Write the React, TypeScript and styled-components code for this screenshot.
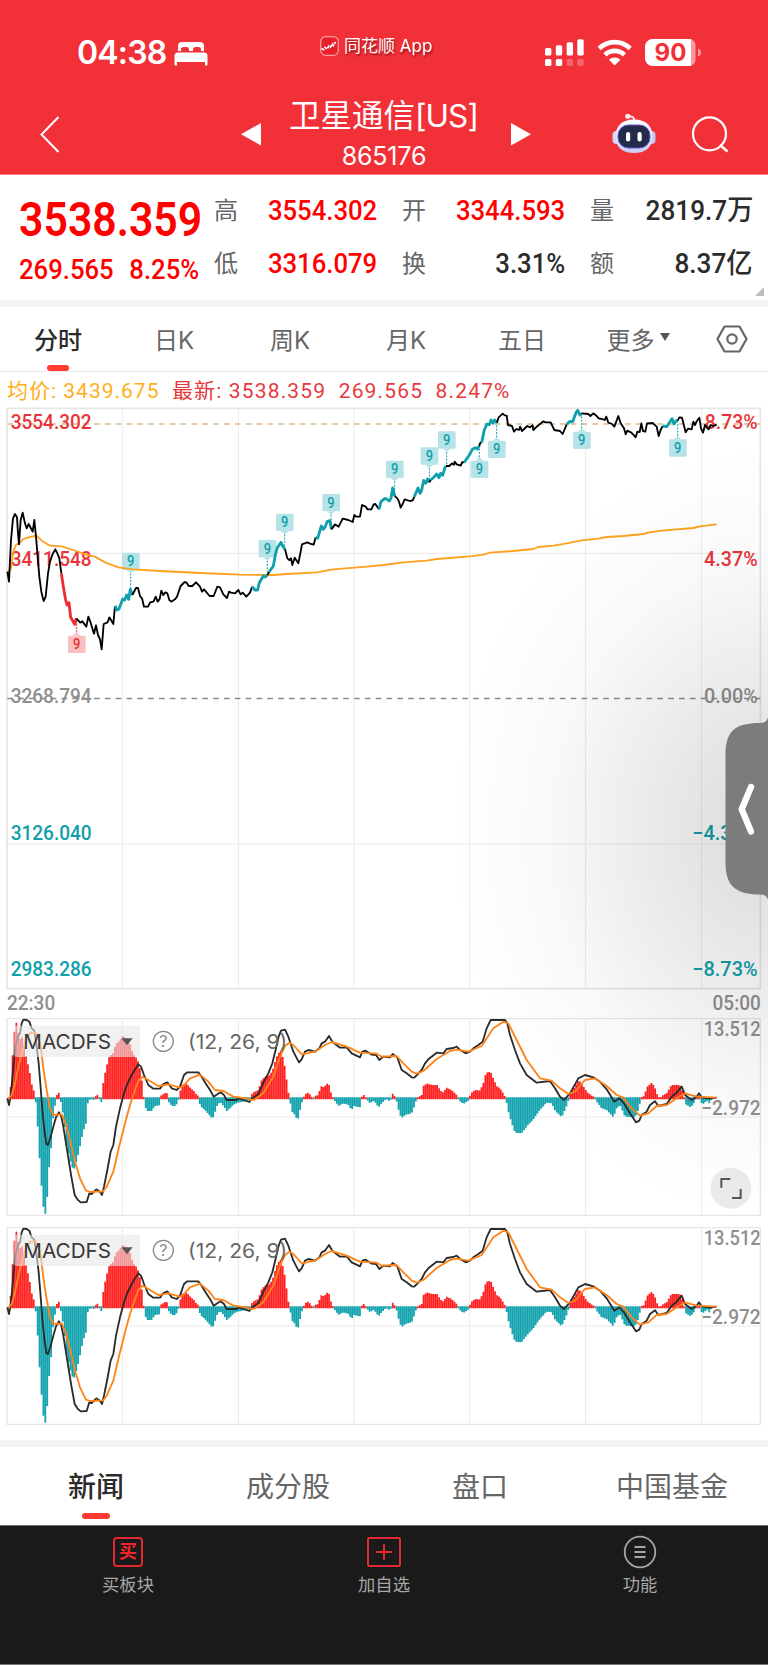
import React from "react";
import styled, { createGlobalStyle } from "styled-components";

const sans = `Inter, "Noto Sans CJK SC", sans-serif`;
const din = `Roboto, "Noto Sans CJK SC", sans-serif`;

const Global = createGlobalStyle`
  * { box-sizing: border-box; }
  body { margin: 0; background: #fff; }
`;

const Page = styled.div`
  position: relative;
  width: 768px;
  height: 1665px;
  overflow: hidden;
  display: flex;
  flex-direction: column;
  background: #fff;
  font-family: ${sans};
  white-space: nowrap;
`;

/* ---------- header ---------- */
const Header = styled.header`
  height: 175px;
  flex: none;
  background: #f23038;
  border-bottom: 1px solid #f88085;
  color: #fff;
`;
const StatusBar = styled.div`
  height: 90px;
  display: grid;
  grid-template-columns: 320px 223px 1fr;
  align-items: start;
`;
const Clock = styled.div`
  display: flex;
  align-items: flex-start;
  gap: 8px;
  padding: 33px 0 0 77px;
  font-size: 32px;
  line-height: 40px;
  font-weight: 600;
  letter-spacing: -0.8px;
  svg { margin-top: 9px; }
`;
const AppBadge = styled.div`
  display: flex;
  align-items: center;
  gap: 5px;
  padding-top: 32px;
  font-size: 17px;
  line-height: 25px;
  text-shadow: 1px 2px 2px rgba(90, 0, 0, 0.6);
  span { padding-top: 2px; }
`;
const StatusIcons = styled.div`
  padding-top: 36.5px;
  svg { display: block; }
`;
const NavBar = styled.div`
  height: 84px;
  display: grid;
  grid-template-columns: 40px 201px 20px 1fr 20px 81px 45px 34px 77px;
`;
const NavIcon = styled.div<{ $top: number }>`
  padding-top: ${(p) => p.$top}px;
  svg { display: block; }
`;
const TitleBlock = styled.div`
  text-align: center;
  padding-right: 5px;
`;
const Title = styled.div`
  margin-top: 4px;
  font-size: 31.5px;
  line-height: 44px;
`;
const TitleLatin = styled.span`
  letter-spacing: -0.9px;
`;
const Code = styled.div`
  margin-top: 3px;
  font-size: 25px;
  line-height: 30px;
  letter-spacing: -0.2px;
  padding-left: 1px;
`;

/* ---------- quote ---------- */
const Quote = styled.section`
  height: 125px;
  flex: none;
  position: relative;
  display: grid;
  grid-template-columns: 195px 163px 188px 188px;
  padding-left: 19px;
  font-family: ${din};
`;
const Num = styled.span<{ $s?: number; $o?: string }>`
  display: inline-block;
  transform: scaleX(${(p) => p.$s ?? 0.917});
  transform-origin: ${(p) => p.$o ?? "right"} center;
`;
const LastPrice = styled.div`
  color: #f00;
  font-weight: 600;
  font-size: 48.5px;
  line-height: 56px;
  margin-top: 17px;
  height: 56px;
`;
const Change = styled.div`
  display: flex;
  justify-content: space-between;
  width: 180px;
  color: #f00;
  font-size: 28px;
  line-height: 34px;
  font-weight: 500;
  margin-top: 5px;
`;
const StatColumn = styled.div`
  display: flex;
  flex-direction: column;
  padding-top: 16px;
`;
const Stat = styled.div<{ $red?: boolean }>`
  height: 53px;
  display: flex;
  justify-content: space-between;
  align-items: flex-start;
  font-size: 28px;
  line-height: 40px;
  font-weight: 500;
  color: ${(p) => (p.$red ? "#f00" : "#2b2b2b")};
`;
const StatName = styled.span<{ $indent?: boolean }>`
  padding-left: ${(p) => (p.$indent ? 25 : 0)}px;
  font-size: 24px;
  line-height: 41px;
  font-weight: 400;
  color: #666;
`;
const Corner = styled.svg`
  position: absolute;
  right: 4px;
  bottom: 4px;
`;
const Divider = styled.div`
  height: 7px;
  flex: none;
  background: #f4f4f4;
`;

/* ---------- tabs ---------- */
const PeriodTabs = styled.nav`
  height: 65px;
  flex: none;
  display: grid;
  grid-template-columns: repeat(6, 116px) 1fr;
  border-bottom: 1px solid #e6e6e6;
  font-size: 24px;
`;
const NewsTabs = styled.nav`
  height: 78px;
  flex: none;
  display: grid;
  grid-template-columns: repeat(4, 192px);
  font-size: 28px;
`;
const Tab = styled.div<{ $active?: boolean; $bar?: number; $icon?: boolean }>`
  display: flex;
  align-items: center;
  justify-content: center;
  position: relative;
  padding-bottom: ${(p) => (p.$icon ? 0 : 2)}px;
  color: ${(p) => (p.$active ? "#2b2b2b" : "#666")};
  font-weight: ${(p) => (p.$active ? 500 : 400)};
  &::after {
    content: ${(p) => (p.$active ? '""' : "none")};
    position: absolute;
    bottom: ${(p) => ((p.$bar ?? 22) > 25 ? 6 : 0)}px;
    width: ${(p) => p.$bar ?? 22}px;
    height: 6px;
    border-radius: 3px;
    background: #ff3b33;
  }
`;
const Caret = styled.span`
  margin: 0 0 2px 5px;
  border: 5.5px solid transparent;
  border-top: 8px solid #555;
  border-bottom: 0;
`;

/* ---------- charts ---------- */
const Info = styled.div`
  height: 32px;
  flex: none;
  display: flex;
  align-items: center;
  gap: 12.5px;
  padding: 6px 0 0 7px;
  font-family: ${din};
  font-size: 21px;
  line-height: 26px;
  color: #e8393c;
`;
const InfoItem = styled.span<{ $avg?: boolean }>`
  color: ${(p) => (p.$avg ? "#ffae1a" : "inherit")};
  letter-spacing: ${(p) => (p.$avg ? 1 : 1.15)}px;
`;
const Chart = styled.svg`
  display: block;
  flex: none;
  width: 768px;
`;
const Times = styled.div`
  height: 28px;
  flex: none;
  display: flex;
  justify-content: space-between;
  padding: 0 7px;
  font-family: ${din};
  font-weight: 500;
  font-size: 20px;
  line-height: 26px;
  color: #8f8f8f;
`;
const Gap = styled.div<{ $h: number }>`
  height: ${(p) => p.$h}px;
  flex: none;
`;
const Shade = styled.div`
  position: absolute;
  left: 400px;
  top: 440px;
  width: 368px;
  height: 800px;
  pointer-events: none;
  background: radial-gradient(ellipse 320px 390px at 100% 49%, rgba(0, 0, 0, 0.14) 0%, rgba(0, 0, 0, 0.085) 35%, rgba(0, 0, 0, 0.025) 70%, rgba(0, 0, 0, 0) 100%);
`;
const Handle = styled.svg`
  position: absolute;
  right: 0;
  top: 716px;
`;

/* ---------- footer ---------- */
const Footer = styled.footer`
  height: 140px;
  flex: none;
  display: grid;
  grid-template-columns: repeat(3, 256px);
  background: #1a1a1a;
  border-top: 1px solid #6d6d6d;
  border-bottom: 1px solid #777;
`;
const Action = styled.div`
  display: flex;
  flex-direction: column;
  align-items: center;
  gap: 3px;
  padding-top: 9px;
  font-size: 17.3px;
  line-height: 25px;
  color: #a6a6a6;
`;
const ActionBox = styled.div<{ $w: number; $r: number }>`
  width: ${(p) => p.$w}px;
  height: 30px;
  margin: 2px 0;
  display: flex;
  align-items: center;
  justify-content: center;
  border: 2px solid #e02a30;
  border-radius: ${(p) => p.$r}px;
  color: #f5232b;
  font-size: 18px;
  font-weight: 700;
  line-height: 26px;
`;

/* Chart geometry is stored in thirds of a pixel. */
type Tone = "k" | "t" | "r";
const toneColor: Record<Tone, string> = { k: "#000", t: "#10a0ab", r: "#ea2f33" };

const price: [Tone, string][] = [
  ["k", "22,515 27,545 33,420 39,355 45,342 51,352 54,400 57,433 62,360 68,338 75,370 80,385 86,372 98,395 103,360 108,410 113,470 118,530 124,575 131,603 137,590 144,520 150,485 158,462 166,448 172,460 178,475 184,520"],
  ["r", "184,520 190,560 196,595 201,615 207,608 212,652 218,662 224,673 229,655"],
  ["k", "229,655 241,668 247,664 259,680 265,650 271,665 282,701 288,676 294,705 300,718 305,748 311,672 323,667 328,652 340,672 345,618"],
  ["t", "345,618 351,630 357,627 368,597 374,600 380,585 386,598 391,568 397,585"],
  ["k", "397,585 408,564 414,564 420,588 426,595 432,620 444,620 450,608 461,604 467,590 473,605 479,597 484,572 490,585 496,577 502,580 508,600 514,605 525,598 531,590 542,558 554,546 560,548 566,558 577,558 588,547 600,560 606,575 612,568 629,588 641,588 652,560 660,562 670,583 681,594 687,575 693,578 705,580 715,570 722,583 728,578 739,590 750,578 757,560"],
  ["t", "757,560 765,570 773,570 778,548 790,528 796,531 802,525"],
  ["k", "802,525 808,515"],
  ["t", "808,515 820,498 826,465 831,445 843,427 849,440 855,448"],
  ["k", "855,448 862,475 868,480 873,475 877,495 884,473 895,490 901,460 906,433 922,427 930,431 941,434 947,412"],
  ["t", "947,412 953,415 959,395 964,378 970,388 976,380 981,365 990,362 994,388"],
  ["k", "994,388 1005,373 1016,380 1028,356 1045,360 1058,366 1063,345 1068,350 1080,350 1086,315 1097,320 1103,328 1114,328 1121,313 1126,312 1137,328"],
  ["t", "1137,328 1143,305 1155,295 1161,298 1168,303 1173,295 1178,264 1184,288"],
  ["k", "1184,288 1192,295 1197,305 1202,323 1208,312 1214,298 1230,303 1238,301 1243,290"],
  ["t", "1243,290 1254,264 1260,280 1265,270 1271,241 1277,250 1283,237 1288,247"],
  ["k", "1288,247 1292,240"],
  ["t", "1292,240 1305,228 1310,222 1317,233 1322,220 1328,226 1334,205 1338,198"],
  ["k", "1338,198 1348,198 1356,190 1362,194 1364,185 1370,193 1382,197 1387,186 1392,188"],
  ["t", "1392,188 1408,165 1417,148 1426,143 1432,147 1438,138"],
  ["k", "1438,138 1440,130 1445,127"],
  ["t", "1445,127 1453,90 1461,72 1468,74 1473,60 1479,70 1484,60 1491,68"],
  ["k", "1491,68 1496,52 1508,41 1514,46 1520,47 1524,75 1536,78 1542,95 1549,87 1557,90 1560,80 1566,93 1582,78 1590,82 1598,76 1600,90 1610,80 1630,64 1636,67 1652,67 1663,90 1680,93 1688,102 1700,73"],
  ["t", "1700,73 1710,64 1718,65 1728,38 1733,31 1740,45 1744,40"],
  ["k", "1744,40 1765,42 1771,48 1780,40 1790,48 1796,55 1806,57 1814,60 1819,50 1825,68 1836,72 1843,80 1855,48 1862,70 1872,85 1877,103 1882,92 1894,98 1900,104 1907,112 1912,95 1919,96 1924,70 1929,93 1936,95 1941,70 1958,69 1970,80 1976,108 1982,90 1988,78"],
  ["t", "1988,78 2000,80 2016,56 2022,72 2028,63 2033,62"],
  ["k", "2033,62 2038,52 2046,53 2057,97 2064,86 2075,88 2080,65 2085,75 2090,64 2098,53 2103,85 2109,98 2115,75 2120,82 2126,88 2132,75 2140,78 2150,74"],
];

const average =
  "25,515 33,505 40,455 48,435 60,428 70,417 85,412 105,408 113,410 125,422 150,437 185,439 220,450 260,465 285,470 315,487 355,502 400,508 480,513 600,519 720,524 820,525 860,522 950,517 1000,508 1100,500 1150,495 1210,487 1280,482 1310,477 1410,469 1450,464 1470,458 1540,453 1600,447 1615,441 1660,437 1700,430 1745,421 1795,416 1820,411 1870,408 1930,402 1945,398 1985,392 2080,384 2100,379 2150,373";

/* x, centre of the flag, price point */
const flags: [number, number, number, Tone][] = [
  [230, 733, 658, "r"],
  [392, 484, 570, "t"],
  [802, 446, 518, "t"],
  [854, 367, 442, "t"],
  [993, 308, 385, "t"],
  [1184, 208, 285, "t"],
  [1288, 168, 240, "t"],
  [1340, 120, 195, "t"],
  [1438, 208, 142, "t"],
  [1490, 148, 70, "t"],
  [1745, 121, 44, "t"],
  [2033, 144, 64, "t"],
];

const gridX = [367, 715, 1062, 1409, 1757, 2105];

type Label = [string, number, number, "start" | "end", number, string];
const priceLabels: Label[] = [
  ["3554.302", 32, 86, "start", 243, "#e8343a"],
  ["3411.548", 32, 497, "start", 243, "#e8343a"],
  ["3268.794", 32, 908, "start", 243, "#8f8f8f"],
  ["3126.040", 32, 1319, "start", 243, "#10a0ab"],
  ["2983.286", 32, 1729, "start", 243, "#10a0ab"],
  ["8.73%", 2273, 86, "end", 159, "#e8343a"],
  ["4.37%", 2273, 497, "end", 161, "#e8343a"],
  ["0.00%", 2273, 908, "end", 161, "#8f8f8f"],
  ["−4.37%", 2273, 1319, "end", 196, "#10a0ab"],
  ["−8.73%", 2273, 1729, "end", 196, "#10a0ab"],
];

const Labels = ({ items }: { items: Label[] }) => (
  <g fontFamily="Roboto, sans-serif" fontWeight={500} fontSize={61}>
    {items.map(([t, x, y, a, w, c]) => (
      <text key={t} x={x} y={y} textAnchor={a} textLength={w} lengthAdjust="spacingAndGlyphs" fill={c}>
        {t}
      </text>
    ))}
  </g>
);

const PriceChart = () => (
  <Chart height={586} viewBox="0 12 2304 1758">
    <g stroke="#ebebeb" strokeWidth={3} fill="none">
      {gridX.map((x) => (
        <path key={x} d={`M${x} 25V1766`} />
      ))}
      <path d="M22 460H2281M22 1332H2281" />
      <path d="M21 25H2281V1766H21Z" strokeWidth={5} stroke="#e6e6e6" />
    </g>
    <path d="M22 72H2281" stroke="#dcb98c" strokeWidth={4} strokeDasharray="17 15.5" />
    <path d="M22 895.5H2281" stroke="#8a8a8a" strokeWidth={4} strokeDasharray="17 15.5" />
    {flags.map(([x, c, p, tone]) => {
      const up = p < c;
      const edge = up ? c - 26 : c + 26;
      const tip = up ? edge - 10 : edge + 10;
      const fill = tone === "r" ? "#f9bfc1" : "#b5e3e7";
      return (
        <g key={x}>
          <rect x={x - 26} y={c - 26} width={53} height={52} rx={4} fill={fill} />
          <path d={`M${x - 12} ${edge}L${x} ${tip}L${x + 12} ${edge}Z`} fill={fill} />
          <path d={`M${x} ${tip}V${p}`} stroke={toneColor[tone]} strokeWidth={3} strokeDasharray="6 4" />
        </g>
      );
    })}
    <Labels items={priceLabels} />
    <polyline points={average} fill="none" stroke="#ffa01e" strokeWidth={5.5} strokeLinejoin="round" />
    {price.map(([tone, pts], i) => (
      <polyline key={i} points={pts} fill="none" stroke={toneColor[tone]} strokeWidth={tone === "k" ? 5.5 : 8.5} strokeLinejoin="round" />
    ))}
    {flags.map(([x, c, , tone]) => (
      <text key={x} x={x} y={c + 15} textAnchor="middle" fontFamily="Roboto, sans-serif" fontWeight={500} fontSize={43} textLength={22} lengthAdjust="spacingAndGlyphs" fill={toneColor[tone]}>
        9
      </text>
    ))}
  </Chart>
);

const ZERO = 355;
const envelope =
  "25,382 28,340 33,315 38,218 44,148 50,125 56,165 62,180 68,170 74,210 80,236 86,262 92,290 98,330 104,333 106,355 109,388 114,455 120,558 126,638 132,698 137,702 143,638 148,554 155,490 160,400 166,372 168,355 170,346 178,337 181,355 184,380 190,405 196,460 202,520 208,520 212,550 218,565 224,566 230,540 236,520 242,490 248,462 254,440 260,425 264,360 275,358 285,362 288,337 293,345 298,355 303,378 307,325 313,290 320,258 328,228 338,222 345,200 350,190 358,183 368,168 374,172 380,180 390,190 396,212 402,225 410,235 416,248 422,275 428,320 431,348 434,375 440,393 455,393 465,378 478,376 482,347 497,338 502,340 505,365 515,378 527,378 535,362 540,335 548,312 560,310 572,325 580,330 590,345 596,348 598,370 606,383 615,390 625,402 636,415 642,410 648,385 655,370 662,368 672,380 680,393 690,385 700,375 712,368 730,365 745,362 752,355 756,340 765,335 775,330 785,300 795,290 810,285 820,265 828,235 835,220 842,212 848,230 853,250 860,300 865,335 869,358 876,395 885,405 893,422 898,400 905,370 909,357 914,345 922,337 930,343 936,352 940,360 945,348 955,345 962,318 972,322 980,312 986,310 992,335 998,352 1004,362 1015,378 1030,370 1045,375 1055,390 1062,378 1080,382 1084,352 1095,342 1098,356 1110,370 1122,362 1136,383 1145,370 1158,357 1168,363 1174,358 1177,340 1185,350 1190,365 1198,400 1205,415 1215,405 1235,400 1245,375 1250,355 1265,345 1270,318 1282,310 1295,315 1312,315 1320,330 1328,338 1340,323 1355,330 1370,345 1376,360 1390,372 1405,362 1412,340 1425,330 1440,332 1450,310 1458,278 1472,275 1480,295 1490,318 1500,325 1510,340 1516,352 1518,360 1525,395 1535,430 1545,458 1565,460 1580,440 1600,418 1620,390 1640,368 1655,370 1665,392 1685,412 1695,390 1703,370 1707,355 1710,340 1722,325 1736,300 1748,315 1760,335 1775,347 1785,352 1790,365 1805,385 1820,390 1840,412 1850,385 1860,375 1875,410 1905,412 1912,398 1919,375 1921,353 1932,348 1942,320 1956,307 1968,330 1974,352 1981,358 1984,348 2000,340 2014,315 2040,315 2050,340 2053,358 2056,372 2072,382 2085,365 2088,356 2096,345 2100,355 2105,370 2112,372 2120,360 2128,370 2135,357 2150,355"
    .split(" ")
    .map((p) => p.split(",").map(Number));

const bars: { x: number; y: number }[] = [];
for (let x = 26, i = 0; x < 2134; x += 5.79) {
  while (envelope[i + 1][0] < x) i++;
  const [x0, y0] = envelope[i];
  const [x1, y1] = envelope[i + 1];
  bars.push({ x, y: y0 + ((y1 - y0) * (x - x0)) / (x1 - x0) });
}
const redBars = bars.filter((b) => b.y < ZERO).map((b) => `M${b.x.toFixed(1)} 358V${Math.min(b.y, 352).toFixed(1)}`).join("");
const tealBars = bars.filter((b) => b.y >= ZERO).map((b) => `M${b.x.toFixed(1)} 352V${Math.max(b.y, 358).toFixed(1)}`).join("");

const dif =
  "22,355 27,375 33,340 40,260 47,195 54,170 60,160 65,130 70,119 80,120 88,125 95,145 103,152 110,200 116,250 121,310 127,390 133,450 139,492 144,495 152,470 160,440 168,412 177,397 184,410 190,440 198,490 206,540 214,590 224,645 232,658 242,667 260,666 268,640 275,642 289,628 300,635 306,645 312,620 322,570 332,515 340,495 348,440 360,385 372,340 382,312 395,285 404,270 415,253 423,260 432,285 445,315 460,326 480,326 490,312 502,307 515,325 530,330 540,320 552,285 562,277 595,277 605,290 618,312 630,330 641,350 652,343 662,337 672,345 680,360 710,360 715,355 730,360 748,366 757,355 775,343 790,308 805,280 817,250 828,205 836,170 843,152 855,149 865,170 880,215 897,247 905,238 915,215 925,210 945,215 958,205 965,190 975,185 987,168 997,185 1020,203 1040,202 1055,220 1080,232 1087,215 1097,212 1115,224 1128,225 1138,240 1150,230 1170,232 1178,222 1192,232 1205,270 1220,280 1235,292 1243,293 1265,270 1275,250 1285,238 1310,218 1330,220 1340,207 1360,204 1370,200 1380,210 1397,220 1410,215 1420,205 1435,195 1448,185 1460,145 1472,120 1515,120 1522,130 1530,165 1545,210 1560,250 1580,285 1610,308 1650,303 1665,325 1680,350 1692,360 1710,340 1735,295 1755,285 1780,292 1800,305 1820,328 1843,365 1858,355 1872,370 1890,400 1908,427 1918,422 1925,405 1940,395 1950,375 1965,364 1975,378 2000,372 2015,350 2030,338 2045,320 2055,345 2075,360 2090,350 2097,340 2105,352 2130,356 2150,353";
const dea =
  "25,358 35,345 45,310 55,260 68,210 80,172 92,158 105,157 115,170 122,200 130,265 140,330 150,385 160,405 185,403 197,430 210,480 225,545 240,595 258,632 270,636 310,634 320,620 340,575 355,510 375,430 390,375 405,330 415,303 428,290 445,300 475,318 505,313 540,323 550,318 570,295 600,284 625,305 645,330 670,333 700,350 740,355 752,360 765,358 790,340 820,290 840,230 855,198 868,188 880,195 905,223 945,215 975,195 995,186 1040,200 1080,218 1130,221 1145,230 1190,228 1210,250 1235,275 1250,281 1270,273 1310,237 1350,213 1370,209 1405,215 1445,198 1480,145 1510,125 1525,130 1550,180 1580,240 1620,295 1655,302 1680,325 1705,342 1725,335 1755,300 1785,295 1820,318 1850,345 1870,353 1895,385 1920,407 1945,400 1970,378 2000,375 2030,355 2055,340 2090,350 2150,353";

const macdLabels: Label[] = [
  ["13.512", 2282, 167, "end", 171, "#8f8f8f"],
  ["−2.972", 2282, 404, "end", 178, "#8f8f8f"],
];

const MacdChart = ({ expandable }: { expandable?: boolean }) => (
  <Chart height={198} viewBox="0 114 2304 594">
    <g stroke="#ebebeb" strokeWidth={3} fill="none">
      {gridX.map((x) => (
        <path key={x} d={`M${x} 116V706`} />
      ))}
      <path d="M22 411H2281" />
      <path d="M21 116H2281V706H21Z" strokeWidth={4} stroke="#e6e6e6" />
    </g>
    <path d={redBars} stroke="#ff2020" strokeWidth={5.3} />
    <path d={tealBars} stroke="#12a3af" strokeWidth={5.3} />
    <polyline points={dif} fill="none" stroke="#2b2b2b" strokeWidth={5.5} strokeLinejoin="round" />
    <polyline points={dea} fill="none" stroke="#ff8418" strokeWidth={5.5} strokeLinejoin="round" />
    <Labels items={macdLabels} />
    <rect x={43} y={137} width={377} height={94} rx={6} fill="rgba(232,232,232,0.6)" />
    <g fontFamily="Inter, sans-serif" fontSize={60}>
      <text x={70} y={207} textLength={263} lengthAdjust="spacingAndGlyphs" fill="#383838">MACDFS</text>
      <text x={564} y={206} textLength={298} lengthAdjust="spacingAndGlyphs" fill="#666">(12, 26, 9)</text>
      <text x={490} y={202} fontSize={48} textAnchor="middle" fill="#8a8a8a">?</text>
    </g>
    <path d="M364 175H398L381 196Z" fill="#555" />
    <circle cx={490} cy={184} r={30} fill="none" stroke="#8a8a8a" strokeWidth={4} />
    {expandable && (
      <g fill="none" stroke="#555" strokeWidth={6}>
        <circle cx={2193} cy={625} r={61.5} fill="#ebebeb" stroke="none" />
        <path d="M2164 623V597H2191M2222 627V654H2196" />
      </g>
    )}
  </Chart>
);

const BedIcon = () => (
  <svg width="34" height="24" viewBox="0 0 34 24" fill="#fff">
    <path d="M4 9V4a4 4 0 0 1 4-4h18a4 4 0 0 1 4 4v5h-3V7.500a2.500 2.500 0 0 0-2.500-2.500h-3A2.500 2.500 0 0 0 19 7.500V9h-4V7.500A2.500 2.500 0 0 0 12.500 5h-3A2.500 2.500 0 0 0 7 7.500V9Z" />
    <path d="M4 10.500h26a3.500 3.500 0 0 1 3.500 3.500v8.500a1 1 0 0 1-1 1H31V20H3v3.500H1.500a1 1 0 0 1-1-1V14A3.500 3.500 0 0 1 4 10.500Z" />
  </svg>
);

const AppIcon = () => (
  <svg width="19" height="20" viewBox="0 0 19 20" fill="none">
    <rect x="0.7" y="0.7" width="17.6" height="18.6" rx="5" fill="#e8202a" stroke="#f99a9d" strokeWidth="1.3" />
    <path d="M1.500 12.500l2 1 1.500-2 2 1.500 2-3 1.500 1 2-3 1 1.500 2-3.500" stroke="#fff" strokeWidth="1.8" strokeDasharray="3 1" />
  </svg>
);

const DeviceStatus = () => (
  <svg width="160" height="32" viewBox="0 0 160 32" fill="#fff">
    <rect x="2" y="11" width="6.4" height="7.5" rx="1.6" />
    <rect x="12.8" y="8.3" width="6.4" height="10.2" rx="1.6" />
    <rect x="23.6" y="5.3" width="6.4" height="13.2" rx="1.6" />
    <rect x="34.3" y="2.3" width="6.4" height="16.2" rx="1.6" />
    <rect x="2" y="22" width="6.4" height="7" rx="1.6" />
    <rect x="12.8" y="22" width="6.4" height="7" rx="1.6" />
    <rect x="23.6" y="22" width="6.4" height="7" rx="1.6" opacity=".25" />
    <rect x="34.3" y="22" width="6.4" height="7" rx="1.6" opacity=".25" />
    <g fill="none" stroke="#fff" strokeWidth="4.6">
      <path d="M56.200 11.500a22 22 0 0 1 31 0" />
      <path d="M62 17.800a14 14 0 0 1 19.400 0" />
    </g>
    <path d="M66 22.800a8.200 8.200 0 0 1 11.400 0L71.700 28.500Z" />
    <path d="M110 2h37a6 6 0 0 1 5.500 6v15a6 6 0 0 1-5.500 6h-37a8 8 0 0 1-8-8V10a8 8 0 0 1 8-8Z" opacity=".5" />
    <path d="M110 2h38v27h-38a8 8 0 0 1-8-8V10a8 8 0 0 1 8-8Z" />
    <path d="M155 11.500q3 1 3 4t-3 4Z" opacity=".5" />
    <text x="127.5" y="24" textAnchor="middle" fontFamily="Inter, sans-serif" fontWeight="700" fontSize="24" fill="#f23038">
      90
    </text>
  </svg>
);

const RobotIcon = () => (
  <svg width="44" height="41" viewBox="0 0 44 41">
    <defs>
      <linearGradient id="shell" x1="0" y1="0" x2="0" y2="1">
        <stop offset="0" stopColor="#fff" />
        <stop offset="1" stopColor="#c9cdf5" />
      </linearGradient>
    </defs>
    <path d="M16.500 3.500q6-1 6 5" fill="none" stroke="#f5e9f2" strokeWidth="1.8" />
    <circle cx="15.8" cy="3.3" r="2.6" fill="#f5e9f2" />
    <rect x="0.5" y="18" width="8" height="13" rx="4" fill="#d6d8f5" />
    <rect x="35.5" y="18" width="8" height="13" rx="4" fill="#c3c7f0" />
    <path d="M22 6.500c12 0 18.500 6.500 18.500 17S34 40 22 40 3.500 34 3.500 23.500 10 6.500 22 6.500Z" fill="url(#shell)" />
    <rect x="6" y="12" width="32" height="23" rx="10.5" fill="#222b48" stroke="#6d52d8" strokeWidth="1" />
    <rect x="14" y="19" width="4.2" height="9.5" rx="2.1" fill="#fff" />
    <rect x="25.5" y="19" width="4.2" height="9.5" rx="2.1" fill="#fff" />
  </svg>
);

const news = ["新闻", "成分股", "盘口", "中国基金"];
const periods = ["分时", "日K", "周K", "月K", "五日"];

export default function App() {
  return (
    <Page>
      <Global />
      <Header>
        <StatusBar>
          <Clock>
            04:38
            <BedIcon />
          </Clock>
          <AppBadge>
            <AppIcon />
            <span>同花顺 App</span>
          </AppBadge>
          <StatusIcons>
            <DeviceStatus />
          </StatusIcons>
        </StatusBar>
        <NavBar>
          <span />
          <NavIcon $top={26}>
            <svg width="20" height="38" fill="none" stroke="#fff" strokeWidth="2">
              <path d="M18.500 1L1.500 18.500L18.500 36" />
            </svg>
          </NavIcon>
          <NavIcon $top={33}>
            <svg width="20" height="23" fill="#fff"><path d="M20 0V22.500L0 11.200Z" /></svg>
          </NavIcon>
          <TitleBlock>
            <Title>卫星通信<TitleLatin>[US]</TitleLatin></Title>
            <Code>865176</Code>
          </TitleBlock>
          <NavIcon $top={33}>
            <svg width="20" height="23" fill="#fff"><path d="M0 0V22.500L20 11.200Z" /></svg>
          </NavIcon>
          <span />
          <NavIcon $top={23}>
            <RobotIcon />
          </NavIcon>
          <span />
          <NavIcon $top={26}>
            <svg width="38" height="38" fill="none" stroke="#fff" strokeWidth="2.2">
              <circle cx="18.5" cy="17.8" r="16.5" />
              <path d="M29 29L36.500 35.500" strokeWidth="2.6" />
            </svg>
          </NavIcon>
        </NavBar>
      </Header>

      <Quote>
        <div>
          <LastPrice><Num $s={0.882} $o="left">3538.359</Num></LastPrice>
          <Change>
            <Num $o="left">269.565</Num>
            <Num>8.25%</Num>
          </Change>
        </div>
        <StatColumn>
          <Stat $red><StatName>高</StatName><Num>3554.302</Num></Stat>
          <Stat $red><StatName>低</StatName><Num>3316.079</Num></Stat>
        </StatColumn>
        <StatColumn>
          <Stat $red><StatName $indent>开</StatName><Num>3344.593</Num></Stat>
          <Stat><StatName $indent>换</StatName><Num>3.31%</Num></Stat>
        </StatColumn>
        <StatColumn>
          <Stat><StatName $indent>量</StatName><Num $s={0.935}>2819.7万</Num></Stat>
          <Stat><StatName $indent>额</StatName><Num $s={0.935}>8.37亿</Num></Stat>
        </StatColumn>
        <Corner width="9" height="9"><path d="M9 0V9H0Z" fill="#bdbdbd" /></Corner>
      </Quote>
      <Divider />

      <PeriodTabs>
        {periods.map((p, i) => (
          <Tab key={p} $active={i === 0}>{p}</Tab>
        ))}
        <Tab>更多<Caret /></Tab>
        <Tab $icon>
          <svg width="32" height="28" fill="none" stroke="#666" strokeWidth="2.2" strokeLinejoin="round">
            <path d="M8.500 1.500H23.500L30.500 14L23.500 26.500H8.500L1.500 14Z" />
            <circle cx="16" cy="14" r="4.7" />
          </svg>
        </Tab>
      </PeriodTabs>

      <Info>
        <InfoItem $avg>均价: 3439.675</InfoItem>
        <InfoItem>最新: 3538.359</InfoItem>
        <InfoItem>269.565</InfoItem>
        <InfoItem>8.247%</InfoItem>
      </Info>
      <PriceChart />
      <Times>
        <Num $s={0.95} $o="left">22:30</Num>
        <Num $s={0.95}>05:00</Num>
      </Times>
      <MacdChart expandable />
      <Gap $h={11} />
      <MacdChart />
      <Gap $h={15} />
      <Divider />

      <NewsTabs>
        {news.map((n, i) => (
          <Tab key={n} $active={i === 0} $bar={28}>{n}</Tab>
        ))}
      </NewsTabs>

      <Footer>
        <Action>
          <ActionBox $w={30} $r={4}>买</ActionBox>
          买板块
        </Action>
        <Action>
          <ActionBox $w={34} $r={2}>
            <svg width="18" height="18" stroke="#e02a30" strokeWidth="2"><path d="M9 1V17M1 9H17" /></svg>
          </ActionBox>
          加自选
        </Action>
        <Action>
          <svg width="34" height="34" fill="none" stroke="#a6a6a6" strokeWidth="1.8">
            <circle cx="17" cy="17" r="15.3" />
            <path d="M11.500 12H22.500M11.500 17H22.500M11.500 22H22.500" strokeWidth="2" />
          </svg>
          功能
        </Action>
      </Footer>

      <Shade />
      <Handle width="43" height="186" viewBox="0 0 43 186">
        <path d="M43 1Q42 7 35 7C10 7 0.500 15 0.500 39V147C0.500 169 10 178.500 35 178.500Q42 178.500 43 184Z" fill="#7b7c7c" />
        <path d="M26 71L16.700 93.300L26 115.500" fill="none" stroke="#fff" strokeWidth="6.3" strokeLinecap="round" strokeLinejoin="round" />
      </Handle>
    </Page>
  );
}
